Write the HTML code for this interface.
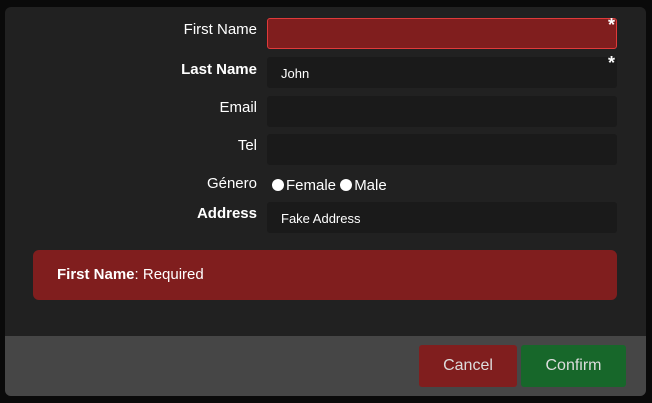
<!DOCTYPE html>
<html><head><style>
*{box-sizing:border-box;margin:0;padding:0}
body{width:652px;height:403px;background:#0a0a0a;font-family:"Liberation Sans",sans-serif;position:relative;overflow:hidden;color:#fff}
.modal{position:absolute;left:5px;top:7px;width:641px;height:389px;background:#212121;border-radius:6px;overflow:hidden}
.lab{position:absolute;right:389px;font-size:15px;color:#fff;text-align:right;white-space:nowrap}
.b{font-weight:bold}
.inp{position:absolute;left:262px;width:350px;height:31px;background:#1a1a1a;border-radius:3px;font-size:13px;padding:9px 14px}
.star{position:absolute;left:603px;font-size:18px;font-weight:bold}
.foot{position:absolute;left:0;top:329px;width:641px;height:60px;background:#464646}
.btn{position:absolute;top:9px;height:42px;border-radius:3px;font-size:16px;color:#ddd;text-align:center;line-height:42px}
.rad{display:inline-block;width:12px;height:12px;border-radius:50%;background:#fff;vertical-align:-1px;margin-right:2px}
</style></head><body>
<div class="modal">
<div class="lab" style="top:14px">First Name</div>
<div class="inp" style="top:11px;background:#801e1e;border:1px solid #e03a3a"></div>
<div class="star" style="top:8px">*</div>
<div class="lab b" style="top:54px">Last Name</div>
<div class="inp" style="top:50px">John</div>
<div class="star" style="top:46px">*</div>
<div class="lab" style="top:92px">Email</div>
<div class="inp" style="top:89px"></div>
<div class="lab" style="top:130px">Tel</div>
<div class="inp" style="top:127px"></div>
<div class="lab" style="top:168px">Género</div>
<div style="position:absolute;left:267px;top:170px;font-size:15px"><span class="rad"></span>Female <span class="rad"></span>Male</div>
<div class="lab b" style="top:198px">Address</div>
<div class="inp" style="top:195px">Fake Address</div>
<div style="position:absolute;left:28px;top:243px;width:584px;height:50px;background:#801e1e;border-radius:6px;font-size:15px;padding:16px 24px"><b>First Name</b>: Required</div>
<div class="foot">
<div class="btn" style="left:414px;width:98px;background:#801e1e">Cancel</div>
<div class="btn" style="left:516px;width:105px;background:#17672a">Confirm</div>
</div>
</div>
</body></html>
